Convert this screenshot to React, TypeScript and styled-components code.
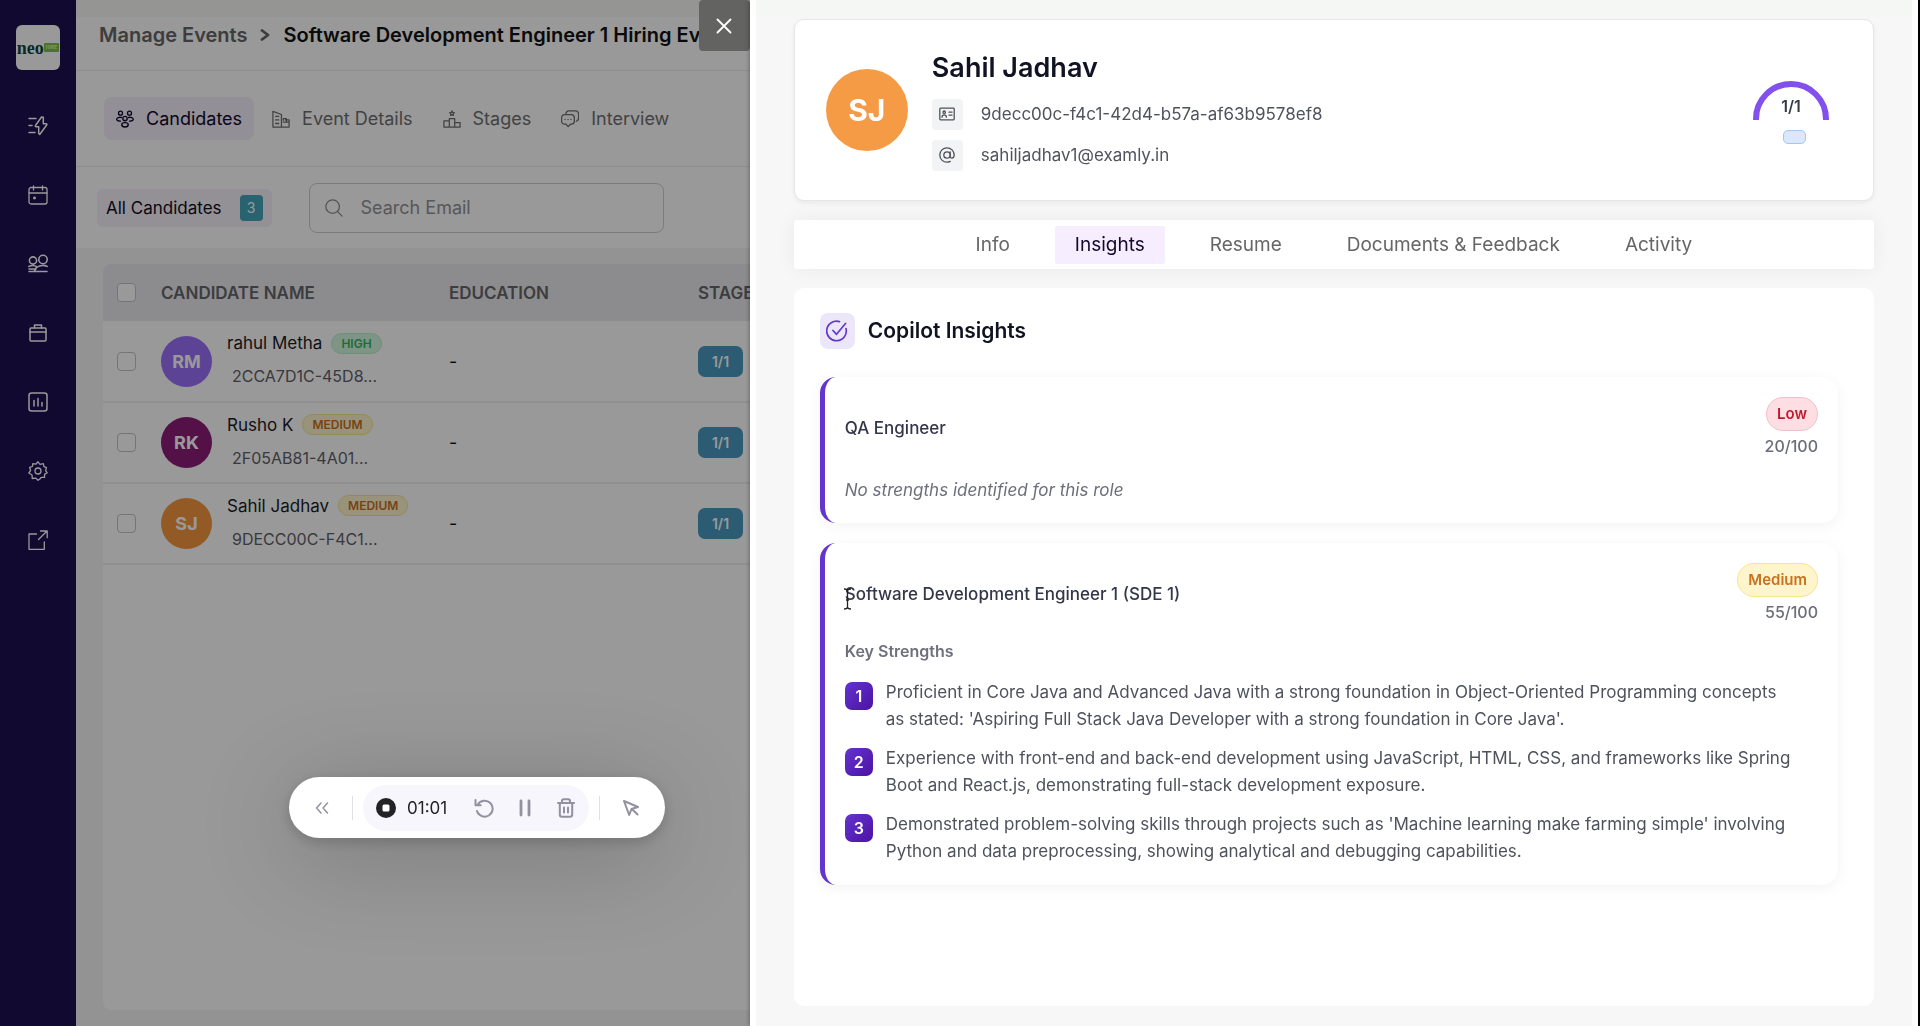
import React from "react";
import styled, { createGlobalStyle, css } from "styled-components";

const GlobalStyle = createGlobalStyle`
  *, *::before, *::after { box-sizing: border-box; }
  body {
    margin: 0;
    font-family: Inter, "Open Sans", "Liberation Sans", sans-serif;
    color: #111;
    background: #fff;
    overflow: hidden;
  }
  button, input { font: inherit; color: inherit; }
  button { border: 0; background: none; padding: 0; cursor: pointer; }
  h1, h2, h3, h4, p, ul, ol { margin: 0; padding: 0; }
  svg { display: block; flex: none; }
`;

/* ---------- icons ---------- */

type IconProps = { size?: number; stroke?: number; children: React.ReactNode; view?: number };

const Icon = ({ size = 20, stroke = 1.5, view = 20, children }: IconProps) => (
  <svg
    width={size}
    height={size}
    viewBox={`0 0 ${view} ${view}`}
    fill="none"
    stroke="currentColor"
    strokeWidth={stroke}
    strokeLinecap="round"
    strokeLinejoin="round"
    aria-hidden="true"
  >
    {children}
  </svg>
);

const BoltIcon = () => (
  <Icon>
    <path d="M1 2.5h7M1 9.5h3M1 16.5h6" />
    <path d="M13.5 1 7.5 9.5c-.4.7-.1 1.2.6 1.2h2.6v6.800l1 1 7-9.500c.4-.7.1-1.200-.6-1.200h-2.800V1.300z" />
  </Icon>
);
const CalendarIcon = () => (
  <Icon stroke={1.3}>
    <rect x="1" y="2.500" width="18" height="16.500" rx="2" />
    <path d="M1 8h18M5.500 1v4M14.500 1v4" />
    <circle cx="6.500" cy="13" r="0.8" fill="currentColor" />
  </Icon>
);
const PeopleIcon = () => (
  <Icon stroke={1.6}>
    <circle cx="5" cy="6.500" r="3.600" />
    <circle cx="15" cy="5.500" r="4.200" />
    <path d="M0.800 12.500c2.500-1.200 6-1.200 8.200.5M9.500 13c2.500-2 7-2 9.700-.6M1 17.500h18M8.500 13.500l-2 3.500M1 15h6" />
  </Icon>
);
const BriefcaseIcon = () => (
  <Icon>
    <rect x="2" y="5" width="16" height="13" rx="1" />
    <path d="M2 9h16M6.500 5V2h7v3" />
  </Icon>
);
const ChartIcon = () => (
  <Icon>
    <rect x="1" y="1" width="18" height="18" rx="2.500" />
    <path d="M6 8.500v5.500M10 6.500v7.500M14 10.500v3.500" />
  </Icon>
);
const GearIcon = () => (
  <Icon stroke={1.3}>
    <circle cx="10" cy="10" r="3" />
    <path d="M10 .8 12 3.300l3.300-.6.600 2.600c.1.300.3.400.6.500l2 .8-.8 2.400c-.1.400 0 .7.200 1l1.300 1.800-2.300 1.300c-.3.200-.4.500-.4.800l.1 2.500-2.800-.1c-.4 0-.7.200-.9.500L11.600 18.200 10 19.300l-1.600-1.700c-.2-.3-.6-.5-1-.5l-3.200.4-.1-3c0-.3-.1-.6-.4-.8L.8 12l1.500-2c.2-.3.3-.6.200-1l-.9-2.600 2.400-.7c.3-.1.500-.3.500-.600l.3-2.400 3 .5z" />
  </Icon>
);
const ExternalIcon = () => (
  <Icon stroke={1.300}>
    <path d="M8.500 4H1v15.300h15.300V12M12.500 1h6.700v6.700M19 1l-8.500 8.500" />
  </Icon>
);
const GroupIcon = () => (
  <Icon size={18} stroke={1.5}>
    <circle cx="5" cy="3.500" r="2.200" />
    <circle cx="15" cy="3.500" r="2.200" />
    <circle cx="10" cy="9.500" r="2.400" />
    <ellipse cx="10" cy="16.500" rx="3.600" ry="2.400" />
    <path d="M6 8.300c-2.500-.6-5.200.3-5.200 2 0 1.400 2 2.200 4.200 2.100M14 8.300c2.500-.6 5.200.3 5.200 2 0 1.400-2 2.200-4.200 2.100" />
  </Icon>
);
const BuildingIcon = () => (
  <Icon size={18} stroke={1.4}>
    <path d="M10.500 19H1V1.500L10.500 5zM10.500 19H19V11h-4M4 7h3.500M4 11h3.500M4 15h3.500M12.500 11.500v-2h3.500v4h-3.500M12.500 13.500h6.500" />
  </Icon>
);
const PodiumIcon = () => (
  <Icon size={18} stroke={1.4}>
    <path d="M1 19v-7h6v7M7 19V9.500h6V19M13 19v-5h6v5M1 19h18M10 1l.8 1.700 1.800.2-1.300 1.300.3 1.800-1.600-.9-1.600.9.3-1.800-1.300-1.300 1.800-.2z" />
  </Icon>
);
const ChatIcon = () => (
  <Icon size={18} stroke={1.4}>
    <path d="M4 5.200h7.500c2 0 3.300 1.500 3.300 3.300v4c0 2-1.500 3.300-3.300 3.300h-1L8 18.500l-2.500-2.700H4c-2 0-3.300-1.500-3.300-3.300v-4C.7 6.500 2 5.200 4 5.200z" />
    <path d="M5.500 4.500c0-2 1.500-3.500 3.500-3.500h7c2 0 3.500 1.500 3.500 3.500v4.500c0 1.800-1 3-2.500 3.500M4.500 10.500h.1M7.800 10.500h.1M11 10.500h.1" />
  </Icon>
);
const SearchIcon = () => (
  <Icon size={18} stroke={1.4}>
    <circle cx="8.500" cy="8.500" r="7.500" />
    <path d="m14 14 5 5" />
  </Icon>
);
const ChevronIcon = () => (
  <Icon size={12} view={12} stroke={2.800}>
    <path d="m3 1.500 6 4.500L3 10.500" />
  </Icon>
);
const CloseIcon = () => (
  <Icon size={16} view={16} stroke={1.800}>
    <path d="m1.500 1.500 13 13m0-13-13 13" />
  </Icon>
);
const IdIcon = () => (
  <Icon size={16} view={16} stroke={1.300}>
    <rect x="0.800" y="2.200" width="14.400" height="11.600" rx="0.800" />
    <circle cx="5.200" cy="6.200" r="1.200" />
    <path d="M3 11.200c.3-3 4.100-3 4.400 0M10 6.200h3M10 9.200h3" />
  </Icon>
);
const AtIcon = () => (
  <Icon size={16} view={16} stroke={1.300}>
    <circle cx="8" cy="8" r="3.200" />
    <path d="M11.200 4.800V9.300c0 2.600 4 2.400 4-1.300A7.200 7.200 0 1 0 8 15.200c1.400 0 2.200-.2 3.200-.8" />
  </Icon>
);
const CheckCircleIcon = () => (
  <Icon size={22} view={22} stroke={1.700}>
    <path d="M20 8.500A9.800 9.800 0 1 1 13.500 1.600M7 10.500l3.500 3.800L19.500 3.500" />
  </Icon>
);
const CollapseIcon = () => (
  <Icon size={14} view={14} stroke={1.500}>
    <path d="M6 2 1.500 7 6 12M12.500 2 8 7l4.500 5" />
  </Icon>
);
const StopIcon = () => (
  <svg width="20" height="20" viewBox="0 0 20 20" aria-hidden="true">
    <circle cx="10" cy="10" r="10" fill="#232326" />
    <rect x="6.500" y="6.500" width="7" height="7" rx="1.500" fill="#fff" />
  </svg>
);
const RestartIcon = () => (
  <Icon size={20} stroke={2}>
    <path d="M3.800 6.500A8 8 0 1 1 3 13M1.500 2v5.200h5.200" />
  </Icon>
);
const PauseIcon = () => (
  <Icon size={18} view={18} stroke={2.800}>
    <path d="M5 2v14M13 2v14" />
  </Icon>
);
const TrashIcon = () => (
  <Icon size={20} stroke={2}>
    <path d="M2 5h16M6 4.800V3c0-1.200.6-1.800 1.800-1.800h4.400c1.200 0 1.800.6 1.800 1.800v1.800M3.800 5.500v11c0 1.500.8 2.300 2.200 2.300h8c1.400 0 2.200-.8 2.200-2.300v-11M8 9.500v5M12 9.500v5" />
  </Icon>
);
const PointerIcon = () => (
  <Icon size={18} view={18} stroke={2}>
    <path d="M2 2l5.200 14 2.300-6 6.500-2zM10 10l5.500 5.500" />
  </Icon>
);

/* ---------- application shell ---------- */

const Shell = styled.div`
  display: grid;
  grid-template-columns: 76px 1fr;
  height: 100vh;
`;

const Sidebar = styled.nav`
  display: flex;
  flex-direction: column;
  align-items: center;
  gap: 49px;
  padding-top: 25px;
  background: #1e0f52;
  color: #fff;
`;

const Logo = styled.a`
  display: flex;
  align-items: center;
  justify-content: center;
  width: 44px;
  height: 45px;
  margin-bottom: -3px;
  overflow: hidden;
  border-radius: 6px;
  background: #fff;
  color: #0f4744;
  font: 700 18px/20px "Liberation Serif", serif;
  text-decoration: none;
`;

const LogoTag = styled.span`
  padding: 0 2px;
  border-radius: 1px;
  background: #7fc241;
  color: #d7f0c0;
  font: 700 5px/9px Inter, sans-serif;
`;

const NavLink = styled.a`
  display: block;
  color: inherit;
`;

const Main = styled.main`
  display: flex;
  flex-direction: column;
  min-width: 0;
  background: linear-gradient(#f8fbf6 0 17px, #fff 17px);
`;

const Breadcrumb = styled.header`
  display: flex;
  align-items: center;
  gap: 12px;
  height: 71px;
  padding: 0 23px;
  border-bottom: 1px solid #ececec;
  font-size: 20px;
  font-weight: 600;
  line-height: 30px;
  white-space: nowrap;
  color: #666;
`;

const CrumbTitle = styled.h1`
  font-size: 20px;
  font-weight: 600;
  line-height: 30px;
  color: #111;
`;

const Tabs = styled.div`
  display: flex;
  align-items: center;
  gap: 6px;
  height: 96px;
  padding: 0 28px;
  border-bottom: 1px solid #ececec;
`;

const Tab = styled.button<{ $active?: boolean }>`
  display: flex;
  align-items: center;
  gap: 12px;
  height: 43px;
  padding: 0 12px;
  border-radius: 8px;
  font-size: 18px;
  line-height: 24px;
  color: ${(p) => (p.$active ? "#12082e" : "#6f6f6f")};
  background: ${(p) => (p.$active ? "#f3effb" : "transparent")};
`;

const Filters = styled.div`
  display: flex;
  align-items: center;
  gap: 37px;
  height: 81px;
  padding: 0 21px;
`;

const FilterChip = styled.button`
  display: flex;
  align-items: center;
  gap: 18px;
  height: 38px;
  padding: 0 9px;
  border-radius: 6px;
  background: #f5f2fa;
  font-size: 17px;
  color: #120b22;
`;

const Count = styled.span`
  width: 23px;
  border-radius: 4px;
  background: #45a5ba;
  color: #fff;
  font-size: 14px;
  line-height: 26px;
  text-align: center;
`;

const SearchBox = styled.label`
  display: flex;
  align-items: center;
  gap: 16px;
  width: 355px;
  height: 50px;
  padding: 0 15px;
  border: 1px solid #cfcfd2;
  border-radius: 8px;
  color: #8a8a8f;
`;

const SearchInput = styled.input`
  flex: 1;
  min-width: 0;
  border: 0;
  outline: 0;
  background: none;
  font-size: 18px;
  &::placeholder { color: #929296; opacity: 1; }
`;

const TableArea = styled.section`
  flex: 1;
  padding: 16px 27px;
  background: #f5f5f7;
`;

const TableCard = styled.div`
  height: 100%;
  overflow: hidden;
  border-radius: 8px;
  background: #fff;
`;

const Table = styled.table`
  width: 100%;
  table-layout: fixed;
  border-collapse: collapse;
`;

const HeadCell = styled.th<{ $width?: number }>`
  width: ${(p) => (p.$width ? `${p.$width}px` : "auto")};
  height: 57px;
  padding: 0;
  background: #eaeaed;
  color: #666669;
  font-size: 17px;
  font-weight: 600;
  text-align: left;
`;

const Cell = styled.td`
  height: 81px;
  padding: 0;
  border-bottom: 2px solid #f0f0f2;
  font-size: 18px;
`;

const Check = styled.input`
  appearance: none;
  display: block;
  width: 19px;
  height: 19px;
  margin: 0 0 0 14px;
  border: 1px solid #c4c4c8;
  border-radius: 4px;
  background: #fff;
`;

const Person = styled.div`
  display: flex;
  align-items: center;
  gap: 15px;
`;

const Avatar = styled.span<{ $color: string; $large?: boolean }>`
  display: flex;
  flex: none;
  align-items: center;
  justify-content: center;
  width: ${(p) => (p.$large ? 82 : 51)}px;
  height: ${(p) => (p.$large ? 82 : 51)}px;
  border-radius: 50%;
  background: ${(p) => p.$color};
  color: #fff;
  font-size: ${(p) => (p.$large ? 30 : 18)}px;
  font-weight: 700;
`;

const PersonText = styled.div`
  display: flex;
  flex-direction: column;
  gap: 9px;
  padding-bottom: 3px;
`;

const PersonName = styled.div`
  display: flex;
  align-items: center;
  gap: 9px;
  font-size: 17px;
  line-height: 24px;
  color: #1c1c28;
`;

const PersonId = styled.div`
  padding-left: 5px;
  font-size: 16px;
  line-height: 24px;
  color: #60606a;
`;

const levels = {
  high: css`
    background: #d2f8df;
    border-color: #b4f0cb;
    color: #36b35f;
  `,
  medium: css`
    background: #fff5cd;
    border-color: #f6e58c;
    color: #c9711d;
  `,
  low: css`
    background: #fddfe3;
    border-color: #f3bfcb;
    color: #c11a30;
  `,
};

const Level = styled.span<{ $level: keyof typeof levels; $large?: boolean }>`
  border: 1px solid;
  border-radius: 17px;
  ${(p) => levels[p.$level]}
  ${(p) =>
    p.$large
      ? css`
          padding: 0 10px;
          font-size: 15px;
          line-height: 32px;
          font-weight: 600;
        `
      : css`
          padding: 0 9px;
          font-size: 12px;
          line-height: 19px;
          font-weight: 600;
        `}
`;

const StageBadge = styled.span`
  display: block;
  width: 45px;
  border-radius: 7px;
  background: #4999c0;
  color: #fff;
  font-size: 14px;
  font-weight: 600;
  line-height: 31px;
  text-align: center;
`;

/* ---------- drawer ---------- */

const Backdrop = styled.div`
  position: fixed;
  inset: 0;
  background: rgba(0, 0, 0, 0.4);
`;

const DrawerWrap = styled.div`
  position: fixed;
  top: 0;
  right: 0;
  bottom: 0;
  display: flex;
  align-items: flex-start;
  width: calc(61vw + 50px);
`;

const CloseButton = styled.button`
  display: flex;
  flex: none;
  align-items: center;
  justify-content: center;
  width: 51px;
  height: 51px;
  border-radius: 4px;
  background: #636462;
  color: #fff;
`;

const Drawer = styled.aside`
  display: flex;
  flex: 1;
  flex-direction: column;
  gap: 19px;
  min-width: 0;
  height: 100%;
  padding: 19px 38px 20px;
  border-left: 6px solid #fff;
  background: linear-gradient(#f5f7f4 0 17px, #f7f7f8 17px);
  box-shadow: -1px 0 4px rgba(0, 0, 0, 0.3);
`;

const DrawerEdge = styled.div`
  width: 8px;
  height: 100%;
  border-right: 2px solid #000;
  background: #fff;
`;

const Profile = styled.section`
  display: flex;
  align-items: center;
  gap: 24px;
  height: 182px;
  padding: 0 44px 0 31px;
  border: 1px solid #e6e6e8;
  border-radius: 10px;
  background: #fff;
  box-shadow: 0 2px 5px rgba(0, 0, 0, 0.06);
`;

const ProfileText = styled.div`
  display: flex;
  flex: 1;
  flex-direction: column;
  gap: 10px;
`;

const ProfileName = styled.h2`
  padding-bottom: 3px;
  font-size: 27px;
  font-weight: 600;
  line-height: 36px;
  color: #101322;
`;

const Detail = styled.p`
  display: flex;
  align-items: center;
  gap: 18px;
  font-size: 17px;
  line-height: 31px;
  color: #50535c;
`;

const DetailIcon = styled.span`
  display: flex;
  align-items: center;
  justify-content: center;
  width: 31px;
  height: 31px;
  border-radius: 4px;
  background: #f2f3f4;
`;

const Score = styled.div`
  display: grid;
  justify-items: center;
  width: 76px;
  padding-top: 5px;
`;

const Gauge = styled.div`
  display: grid;
  justify-items: center;
  align-items: center;
  & > * { grid-area: 1 / 1; }
`;

const GaugeLabel = styled.span`
  padding-top: 10px;
  font-size: 16px;
  font-weight: 600;
  line-height: 20px;
  color: #373b49;
`;

const ScorePill = styled.span`
  width: 23px;
  height: 14px;
  margin: 10px 0 0 7px;
  border: 1px solid #9fc8f3;
  border-radius: 5px;
  background: #dbe8fb;
`;

const DrawerTabs = styled.div`
  display: flex;
  align-items: center;
  justify-content: center;
  gap: 25px;
  height: 49px;
  flex: none;
  border-radius: 3px;
  background: #fff;
  box-shadow: 0 0 20px rgba(0, 0, 0, 0.06);
`;

const DrawerTab = styled.button<{ $active?: boolean }>`
  height: 38px;
  padding: 0 20px;
  border-radius: 2px;
  font-size: 19px;
  line-height: 24px;
  color: ${(p) => (p.$active ? "#16092c" : "#666")};
  background: ${(p) => (p.$active ? "#f6eefe" : "transparent")};
`;

const Insights = styled.section`
  display: flex;
  flex: 1;
  flex-direction: column;
  gap: 20px;
  min-height: 0;
  padding: 25px 36px 25px 26px;
  border-radius: 10px;
  background: #fff;
`;

const InsightsHead = styled.header`
  display: flex;
  align-items: center;
  gap: 13px;
  padding-bottom: 8px;
`;

const InsightsIcon = styled.span`
  display: flex;
  align-items: center;
  justify-content: center;
  width: 35px;
  height: 36px;
  border-radius: 8px;
  background: #ece7f8;
  color: #6238cf;
`;

const InsightsTitle = styled.h3`
  font-size: 21px;
  font-weight: 600;
  line-height: 28px;
  color: #111322;
`;

const RoleCard = styled.article`
  padding: 20px;
  border-left: 5px solid #6335cf;
  border-radius: 16px;
  background: #fff;
  box-shadow: 0 3px 14px rgba(0, 0, 0, 0.05);
`;

const RoleHead = styled.header`
  display: flex;
  align-items: center;
  justify-content: space-between;
`;

const RoleTitle = styled.h4`
  font-size: 17px;
  font-weight: 500;
  line-height: 24px;
  color: #34374a;
`;

const RoleScore = styled.div`
  display: flex;
  flex-direction: column;
  align-items: flex-end;
  gap: 3px;
  font-size: 16px;
  font-weight: 500;
  line-height: 24px;
  color: #6c6f7a;
`;

const Empty = styled.p`
  padding: 20px 0 1px;
  font-size: 17px;
  font-style: italic;
  line-height: 24px;
  color: #6c6f7b;
`;

const StrengthsTitle = styled.p`
  padding: 15px 0 16px;
  font-size: 16px;
  font-weight: 600;
  line-height: 24px;
  color: #6e717d;
`;

const Strengths = styled.ol`
  display: flex;
  flex-direction: column;
  gap: 12px;
  padding-right: 24px;
  list-style: none;
`;

const Strength = styled.li`
  display: flex;
  gap: 13px;
  font-size: 17px;
  line-height: 27px;
  color: #4f525d;
`;

const StrengthNumber = styled.span`
  flex: none;
  width: 28px;
  height: 28px;
  margin-top: 3px;
  border-radius: 7px;
  background: linear-gradient(135deg, #6334cf, #4c12a4);
  color: #fff;
  font-size: 16px;
  font-weight: 600;
  line-height: 28px;
  text-align: center;
`;

/* ---------- floating layers ---------- */

const Recorder = styled.div`
  position: fixed;
  left: 289px;
  bottom: 188px;
  display: flex;
  align-items: center;
  width: 376px;
  height: 61px;
  padding: 0 3px 0 16px;
  border-radius: 31px;
  background: #fff;
  box-shadow: 0 4px 14px rgba(0, 0, 0, 0.18), 0 16px 100px rgba(0, 0, 0, 0.24);
  color: #93909f;
`;

const RecorderButton = styled.button<{ $width: number }>`
  display: flex;
  align-items: center;
  justify-content: center;
  width: ${(p) => p.$width}px;
  height: 40px;
`;

const RecorderGap = styled.span`
  flex: 1;
`;

const Divider = styled.span`
  width: 1px;
  height: 24px;
  background: #e0dfe6;
`;

const RecorderGroup = styled.div`
  display: flex;
  align-items: center;
  height: 46px;
  margin: 0 10px;
  padding: 0 3px 0 8px;
  border-radius: 23px;
  background: #f7f6fc;
`;

const Timer = styled.time`
  width: 62px;
  padding-left: 6px;
  font-size: 17px;
  line-height: 24px;
  color: #232326;
`;

const TextCursor = styled.div`
  position: fixed;
  left: 843px;
  top: 588px;
`;

/* ---------- data ---------- */

const people: { initials: string; color: string; name: string; level: "high" | "medium"; id: string }[] = [
  { initials: "RM", color: "#9a70f8", name: "rahul Metha", level: "high", id: "2CCA7D1C-45D8..." },
  { initials: "RK", color: "#8b1d78", name: "Rusho K", level: "medium", id: "2F05AB81-4A01..." },
  { initials: "SJ", color: "#f5973f", name: "Sahil Jadhav", level: "medium", id: "9DECC00C-F4C1..." },
];

const strengths = [
  "Proficient in Core Java and Advanced Java with a strong foundation in Object-Oriented Programming concepts as stated: 'Aspiring Full Stack Java Developer with a strong foundation in Core Java'.",
  "Experience with front-end and back-end development using JavaScript, HTML, CSS, and frameworks like Spring Boot and React.js, demonstrating full-stack development exposure.",
  "Demonstrated problem-solving skills through projects such as 'Machine learning make farming simple' involving Python and data preprocessing, showing analytical and debugging capabilities.",
];

const navItems = [
  { label: "Quick actions", icon: <BoltIcon /> },
  { label: "Calendar", icon: <CalendarIcon /> },
  { label: "Candidates", icon: <PeopleIcon /> },
  { label: "Jobs", icon: <BriefcaseIcon /> },
  { label: "Reports", icon: <ChartIcon /> },
  { label: "Settings", icon: <GearIcon /> },
  { label: "Open site", icon: <ExternalIcon /> },
];

const eventTabs = [
  { label: "Candidates", icon: <GroupIcon /> },
  { label: "Event Details", icon: <BuildingIcon /> },
  { label: "Stages", icon: <PodiumIcon /> },
  { label: "Interview", icon: <ChatIcon /> },
];

const drawerTabs = ["Info", "Insights", "Resume", "Documents & Feedback", "Activity"];

export default function App() {
  return (
    <>
      <GlobalStyle />
      <Shell>
        <Sidebar aria-label="Main">
          <Logo href="#home">
            neo<LogoTag>HIRE</LogoTag>
          </Logo>
          {navItems.map((item) => (
            <NavLink key={item.label} href="#nav" aria-label={item.label}>
              {item.icon}
            </NavLink>
          ))}
        </Sidebar>
        <Main>
          <Breadcrumb>
            <span>Manage Events</span>
            <ChevronIcon />
            <CrumbTitle>Software Development Engineer 1 Hiring Event</CrumbTitle>
          </Breadcrumb>
          <Tabs>
            {eventTabs.map((tab, i) => (
              <Tab key={tab.label} $active={i === 0}>
                {tab.icon}
                {tab.label}
              </Tab>
            ))}
          </Tabs>
          <Filters>
            <FilterChip>
              All Candidates <Count>3</Count>
            </FilterChip>
            <SearchBox>
              <SearchIcon />
              <SearchInput type="search" placeholder="Search Email" aria-label="Search Email" />
            </SearchBox>
          </Filters>
          <TableArea>
            <TableCard>
              <Table>
                <thead>
                  <tr>
                    <HeadCell $width={58}>
                      <Check type="checkbox" aria-label="Select all" />
                    </HeadCell>
                    <HeadCell $width={288}>CANDIDATE NAME</HeadCell>
                    <HeadCell $width={249}>EDUCATION</HeadCell>
                    <HeadCell>STAGE</HeadCell>
                  </tr>
                </thead>
                <tbody>
                  {people.map((p) => (
                    <tr key={p.id}>
                      <Cell>
                        <Check type="checkbox" aria-label={`Select ${p.name}`} />
                      </Cell>
                      <Cell>
                        <Person>
                          <Avatar $color={p.color}>{p.initials}</Avatar>
                          <PersonText>
                            <PersonName>
                              {p.name}
                              <Level $level={p.level}>{p.level.toUpperCase()}</Level>
                            </PersonName>
                            <PersonId>{p.id}</PersonId>
                          </PersonText>
                        </Person>
                      </Cell>
                      <Cell>-</Cell>
                      <Cell>
                        <StageBadge>1/1</StageBadge>
                      </Cell>
                    </tr>
                  ))}
                </tbody>
              </Table>
            </TableCard>
          </TableArea>
        </Main>
      </Shell>

      <Backdrop />

      <DrawerWrap>
        <CloseButton aria-label="Close">
          <CloseIcon />
        </CloseButton>
        <Drawer>
          <Profile>
            <Avatar $color="#f59a45" $large>
              SJ
            </Avatar>
            <ProfileText>
              <ProfileName>Sahil Jadhav</ProfileName>
              <Detail>
                <DetailIcon>
                  <IdIcon />
                </DetailIcon>
                9decc00c-f4c1-42d4-b57a-af63b9578ef8
              </Detail>
              <Detail>
                <DetailIcon>
                  <AtIcon />
                </DetailIcon>
                sahiljadhav1@examly.in
              </Detail>
            </ProfileText>
            <Score>
              <Gauge>
                <svg width="76" height="39" viewBox="0 0 76 39" aria-hidden="true">
                  <path d="M3 39v-1a35 35 0 0 1 70 0v1" fill="none" stroke="#8250ec" strokeWidth="6" />
                </svg>
                <GaugeLabel>1/1</GaugeLabel>
              </Gauge>
              <ScorePill />
            </Score>
          </Profile>
          <DrawerTabs>
            {drawerTabs.map((label) => (
              <DrawerTab key={label} $active={label === "Insights"}>
                {label}
              </DrawerTab>
            ))}
          </DrawerTabs>
          <Insights>
            <InsightsHead>
              <InsightsIcon>
                <CheckCircleIcon />
              </InsightsIcon>
              <InsightsTitle>Copilot Insights</InsightsTitle>
            </InsightsHead>
            <RoleCard>
              <RoleHead>
                <RoleTitle>QA Engineer</RoleTitle>
                <RoleScore>
                  <Level $level="low" $large>
                    Low
                  </Level>
                  20/100
                </RoleScore>
              </RoleHead>
              <Empty>No strengths identified for this role</Empty>
            </RoleCard>
            <RoleCard>
              <RoleHead>
                <RoleTitle>Software Development Engineer 1 (SDE 1)</RoleTitle>
                <RoleScore>
                  <Level $level="medium" $large>
                    Medium
                  </Level>
                  55/100
                </RoleScore>
              </RoleHead>
              <StrengthsTitle>Key Strengths</StrengthsTitle>
              <Strengths>
                {strengths.map((text, i) => (
                  <Strength key={text}>
                    <StrengthNumber>{i + 1}</StrengthNumber>
                    <p>{text}</p>
                  </Strength>
                ))}
              </Strengths>
            </RoleCard>
          </Insights>
        </Drawer>
        <DrawerEdge />
      </DrawerWrap>

      <Recorder role="toolbar" aria-label="Recording controls">
        <RecorderButton $width={34} aria-label="Collapse">
          <CollapseIcon />
        </RecorderButton>
        <RecorderGap />
        <Divider />
        <RecorderGroup>
          <RecorderButton $width={30} aria-label="Stop">
            <StopIcon />
          </RecorderButton>
          <Timer>01:01</Timer>
          <RecorderButton $width={41} aria-label="Restart">
            <RestartIcon />
          </RecorderButton>
          <RecorderButton $width={41} aria-label="Pause">
            <PauseIcon />
          </RecorderButton>
          <RecorderButton $width={41} aria-label="Delete">
            <TrashIcon />
          </RecorderButton>
        </RecorderGroup>
        <Divider />
        <RecorderButton $width={62} aria-label="Pointer">
          <PointerIcon />
        </RecorderButton>
      </Recorder>

      <TextCursor>
        <svg width="9" height="22" viewBox="0 0 9 22" fill="none" stroke="#222" strokeWidth="1.300" aria-hidden="true">
          <path d="M1 1c2 0 3.500.3 3.500 2v16c0 1.700-1.500 2-3.500 2M8 1c-2 0-3.500.3-3.500 2v16c0 1.700 1.500 2 3.500 2M3 12h3" />
        </svg>
      </TextCursor>
    </>
  );
}
